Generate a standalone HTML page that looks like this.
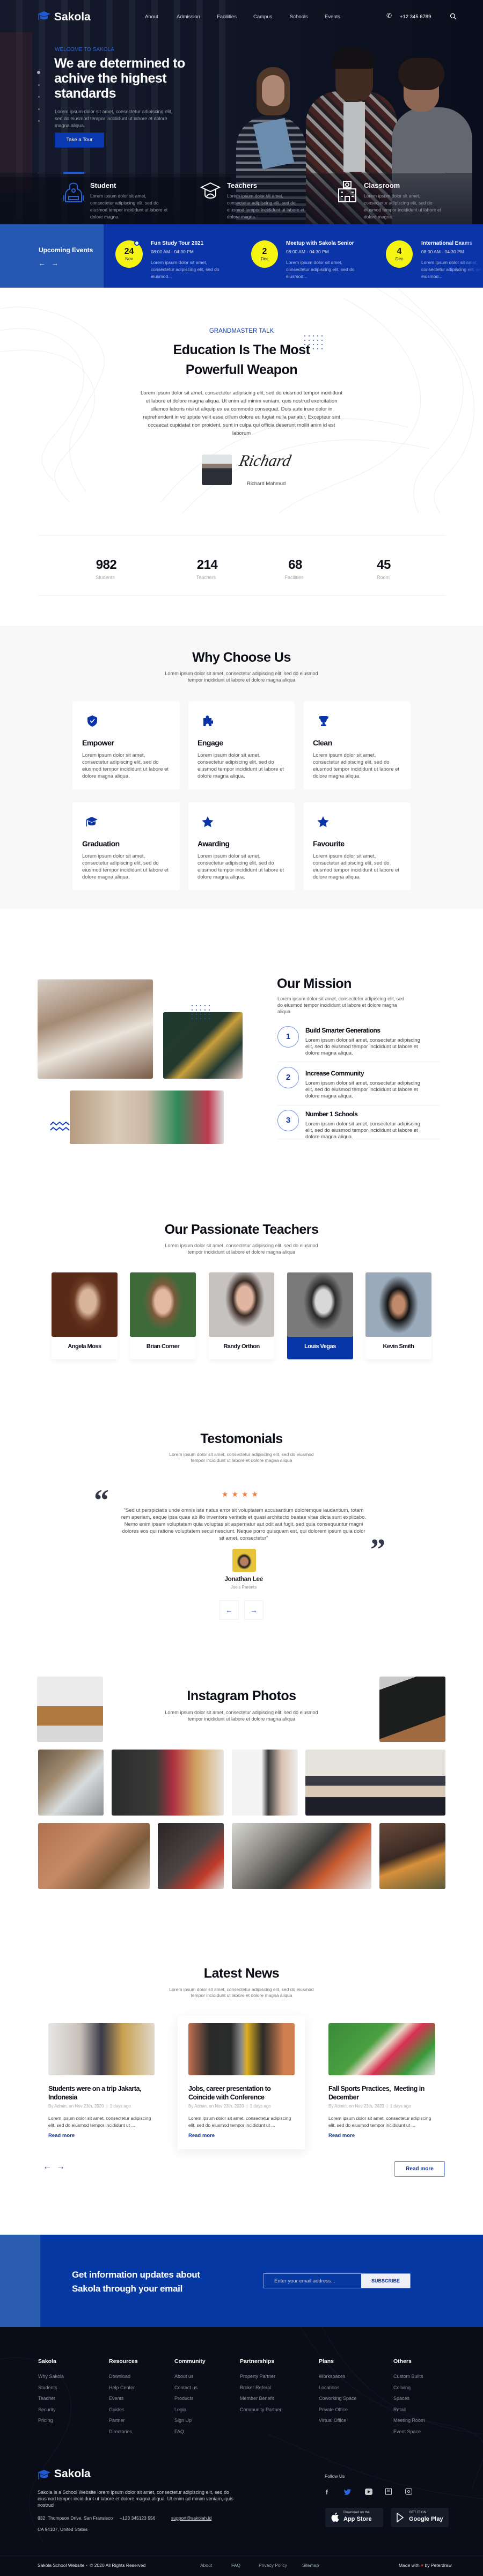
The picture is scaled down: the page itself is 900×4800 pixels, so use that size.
<!DOCTYPE html>
<html><head><meta charset="utf-8"><style>
*{margin:0;padding:0;box-sizing:border-box}
body{width:900px;height:4800px;position:relative;background:#fff;font-family:"Liberation Sans Narrow","Liberation Sans",sans-serif;color:#222;overflow:hidden}
.a{position:absolute}
.h{font-family:"Liberation Sans",sans-serif;font-weight:bold;color:#0b0d17;letter-spacing:-.5px}
.c{text-align:center}
.p{font-size:9.5px;color:#555;line-height:13px}
.card{background:#fff;border-radius:3px}
.ph{border-radius:3px;overflow:hidden}
.fl{font-size:9px;color:#8a8f9c}
</style></head><body>

<!-- HERO -->
<div class="a" style="left:0;top:0;width:900px;height:418px;background:linear-gradient(90deg,#141a2b 0%,#101626 45%,#0a0e1c 100%)"></div>
<div class="a" style="left:0;top:0;width:430px;height:418px;background:repeating-linear-gradient(90deg,rgba(255,255,255,0) 0 30px,rgba(120,130,150,.10) 30px 42px);"></div>
<div class="a" style="left:0;top:60px;width:60px;height:300px;background:rgba(90,40,40,.25)"></div>
<div class="a" style="left:0;top:330px;width:430px;height:88px;background:rgba(0,0,0,.35)"></div>
<!-- students -->
<div style="opacity:.85">
<div class="a" style="left:440px;top:215px;width:130px;height:203px;border-radius:60px 60px 0 0;background:repeating-linear-gradient(0deg,#1c2230 0 8px,#9ea3ac 8px 13px);opacity:.8"></div>
<div class="a" style="left:478px;top:125px;width:62px;height:90px;border-radius:30px 30px 20px 20px;background:#5b3e2b"></div>
<div class="a" style="left:488px;top:140px;width:42px;height:58px;border-radius:20px;background:#c99a82"></div>
<div class="a" style="left:480px;top:225px;width:60px;height:85px;background:#7ea3c8;transform:rotate(-12deg)"></div>
<div class="a" style="left:570px;top:170px;width:170px;height:248px;border-radius:60px 60px 0 0;background:repeating-linear-gradient(45deg,#4d2624 0 10px,#a9a4a2 10px 16px,#2a2224 16px 22px)"></div>
<div class="a" style="left:640px;top:190px;width:40px;height:130px;background:#dcdcdc"></div>
<div class="a" style="left:625px;top:95px;width:70px;height:95px;border-radius:32px;background:#4a3024"></div>
<div class="a" style="left:618px;top:88px;width:80px;height:40px;border-radius:40px 40px 10px 10px;background:#141010"></div>
<div class="a" style="left:730px;top:200px;width:150px;height:218px;border-radius:60px 60px 0 0;background:#74777e"></div>
<div class="a" style="left:752px;top:118px;width:66px;height:90px;border-radius:30px;background:#a6775e"></div>
<div class="a" style="left:742px;top:108px;width:86px;height:60px;border-radius:40px;background:#2a1c16"></div>
</div>
<div class="a" style="left:0;top:322px;width:900px;height:96px;background:linear-gradient(180deg,rgba(10,14,28,.4),rgba(10,14,28,.75))"></div>

<!-- nav -->
<svg class="a" style="left:69px;top:20px" width="26" height="20" viewBox="0 0 26 20"><path d="M13 1 25 6 13 11 1 6Z" fill="#1f5ad1"/><path d="M6 9v5c0 3 14 3 14 0V9l-7 3z" fill="#1f5ad1"/><path d="M3 7v10" stroke="#1f5ad1" stroke-width="1.5"/></svg>
<div class="a" style="left:101px;top:20px;font:bold 21px 'Liberation Sans',sans-serif;color:#fff">Sakola</div>
<div class="a" style="top:48px;left:0;width:900px;font-size:9.5px;color:#ddd">
<span class="a" style="left:270px;top:-22px">About</span><span class="a" style="left:329px;top:-22px">Admission</span><span class="a" style="left:404px;top:-22px">Facilities</span><span class="a" style="left:472px;top:-22px">Campus</span><span class="a" style="left:540px;top:-22px">Schools</span><span class="a" style="left:605px;top:-22px">Events</span></div>
<div class="a" style="left:720px;top:22px;color:#fff;font-size:12px">✆</div>
<div class="a" style="left:745px;top:26px;color:#fff;font-size:9.5px">+12 345 6789</div>
<svg class="a" style="left:838px;top:24px" width="13" height="13"><circle cx="5.5" cy="5.5" r="4" stroke="#fff" fill="none" stroke-width="1.3"/><path d="M8.5 8.5 12 12" stroke="#fff" stroke-width="1.3"/></svg>

<div class="a" style="left:69px;top:132px;width:6px;height:6px;border-radius:50%;background:#aab"></div>
<div class="a" style="left:71px;top:157px;width:3px;height:3px;border-radius:50%;background:#777"></div>
<div class="a" style="left:71px;top:179px;width:3px;height:3px;border-radius:50%;background:#777"></div>
<div class="a" style="left:71px;top:202px;width:3px;height:3px;border-radius:50%;background:#777"></div>
<div class="a" style="left:71px;top:224px;width:3px;height:3px;border-radius:50%;background:#777"></div>

<div class="a" style="left:102px;top:87px;font-size:10px;color:#2a62d4">WELCOME TO SAKOLA</div>
<div class="a h" style="left:101px;top:104px;font-size:25px;line-height:28px;color:#fff;width:360px">We are determined to<br>achive the highest<br>standards</div>
<div class="a" style="left:102px;top:202px;font-size:9px;color:#9aa;line-height:13px;width:230px">Lorem ipsum dolor sit amet, consectetur adipiscing elit, sed do eiusmod tempor incididunt ut labore et dolore magna aliqua.</div>
<div class="a" style="left:102px;top:247px;width:92px;height:28px;background:#0a38b0;border-radius:2px;color:#fff;font-size:9.5px;text-align:center;line-height:28px">Take a Tour</div>
<div class="a" style="left:70px;top:322px;width:760px;height:1px;background:rgba(255,255,255,.15)"></div>
<div class="a" style="left:118px;top:320px;width:39px;height:4px;background:#1f5ad1"></div>

<svg class="a" style="left:118px;top:338px" width="38" height="40" viewBox="0 0 38 40"><g fill="none" stroke="#2b63d6" stroke-width="2"><path d="M12 8c0-6 14-6 14 0v6c6 2 8 6 8 12v12H4V26c0-6 2-10 8-12z"/><circle cx="19" cy="17" r="3"/><path d="M10 28h18v6H10zM1 26v10M37 26v10"/></g></svg>
<svg class="a" style="left:373px;top:338px" width="38" height="40" viewBox="0 0 38 40"><g fill="none" stroke="#fff" stroke-width="2"><path d="M19 3 36 11 19 19 2 11Z"/><path d="M9 15v10c0 8 20 8 20 0V15"/><path d="M12 28c4-6 10-6 14 0"/></g></svg>
<svg class="a" style="left:628px;top:336px" width="38" height="42" viewBox="0 0 38 42"><g fill="none" stroke="#fff" stroke-width="2"><path d="M12 2h14v12h-14z"/><circle cx="19" cy="8" r="3"/><path d="M3 16h32v24H3z"/><path d="M15 40V30h8v10M7 22h4M27 22h4M7 30h4M27 30h4"/></g></svg>
<div class="a" style="left:168px;top:338px;font:bold 13px 'Liberation Sans',sans-serif;color:#fff">Student</div>
<div class="a" style="left:423px;top:338px;font:bold 13px 'Liberation Sans',sans-serif;color:#fff">Teachers</div>
<div class="a" style="left:678px;top:338px;font:bold 13px 'Liberation Sans',sans-serif;color:#fff">Classroom</div>
<div class="a" style="left:168px;top:359px;width:150px;font-size:8.5px;line-height:13px;color:#99a">Lorem ipsum dolor sit amet, consectetur adipiscing elit, sed do eiusmod tempor incididunt ut labore et dolore magna.</div>
<div class="a" style="left:423px;top:359px;width:150px;font-size:8.5px;line-height:13px;color:#99a">Lorem ipsum dolor sit amet, consectetur adipiscing elit, sed do eiusmod tempor incididunt ut labore et dolore magna.</div>
<div class="a" style="left:678px;top:359px;width:150px;font-size:8.5px;line-height:13px;color:#99a">Lorem ipsum dolor sit amet, consectetur adipiscing elit, sed do eiusmod tempor incididunt ut labore et dolore magna.</div>

<!-- EVENTS BAND -->
<div class="a" style="left:0;top:418px;width:900px;height:118px;background:#0b34a9"></div>
<div class="a" style="left:0;top:418px;width:193px;height:118px;background:#2458b2"></div>
<div class="a" style="left:72px;top:459px;font:bold 12px 'Liberation Sans',sans-serif;color:#fff">Upcoming Events</div>
<div class="a" style="left:72px;top:483px;color:#fff;font-size:13px">←&nbsp;&nbsp;&nbsp;→</div>
<div class="a" style="left:215px;top:448px;width:51px;height:51px;border-radius:50%;background:#f6f511;text-align:center;color:#111"><div style="font:bold 16px 'Liberation Sans',sans-serif;margin-top:12px">24</div><div style="font-size:8px">Nov</div></div>
<div class="a" style="left:250px;top:448px;width:10px;height:10px;border-radius:50%;background:#fff;border:2px solid #0b34a9"></div>
<div class="a" style="left:468px;top:448px;width:50px;height:51px;border-radius:50%;background:#f6f511;text-align:center;color:#111"><div style="font:bold 16px 'Liberation Sans',sans-serif;margin-top:12px">2</div><div style="font-size:8px">Dec</div></div>
<div class="a" style="left:719px;top:448px;width:50px;height:51px;border-radius:50%;background:#f6f511;text-align:center;color:#111"><div style="font:bold 16px 'Liberation Sans',sans-serif;margin-top:12px">4</div><div style="font-size:8px">Dec</div></div>
<div class="a" style="left:281px;top:448px;color:#fff;font-size:10px;font-weight:bold">Fun Study Tour 2021</div>
<div class="a" style="left:281px;top:464px;color:#dde;font-size:8.5px">08:00 AM - 04:30 PM</div>
<div class="a" style="left:281px;top:483px;width:150px;color:#a9b8e6;font-size:8.5px;line-height:13px">Lorem ipsum dolor sit amet, consectetur adipiscing elit, sed do eiusmod...</div>
<div class="a" style="left:533px;top:448px;color:#fff;font-size:10px;font-weight:bold">Meetup with Sakola Senior</div>
<div class="a" style="left:533px;top:464px;color:#dde;font-size:8.5px">08:00 AM - 04:30 PM</div>
<div class="a" style="left:533px;top:483px;width:150px;color:#a9b8e6;font-size:8.5px;line-height:13px">Lorem ipsum dolor sit amet, consectetur adipiscing elit, sed do eiusmod...</div>
<div class="a" style="left:785px;top:448px;color:#fff;font-size:10px;font-weight:bold;white-space:nowrap">International Exams</div>
<div class="a" style="left:785px;top:464px;color:#dde;font-size:8.5px;white-space:nowrap">08:00 AM - 04:30 PM</div>
<div class="a" style="left:785px;top:483px;width:150px;color:#a9b8e6;font-size:8.5px;line-height:13px">Lorem ipsum dolor sit amet, consectetur adipiscing elit, sed do eiusmod...</div>
<div class="a" style="left:860px;top:440px;width:40px;height:96px;background:linear-gradient(90deg,rgba(11,52,169,0),#0b34a9)"></div>

<!-- GRANDMASTER -->
<svg class="a" style="left:0;top:536px" width="900" height="420"><g fill="none" stroke="#eceef2" stroke-width="1"><path d="M0 80C100 60 180 120 150 200S40 300 100 360"/><path d="M0 120C120 100 200 160 170 240S60 330 130 400"/><path d="M0 40C80 20 220 80 190 160S90 280 160 380"/><path d="M700 0C800 60 880 120 860 220S740 330 780 420"/><path d="M740 0C830 80 900 160 880 260S780 360 820 420"/><path d="M640 20C760 80 820 200 760 280S600 360 520 420"/><path d="M300 400C420 250 600 220 760 260"/><path d="M340 420C460 290 620 260 800 300"/></g></svg>
<div class="a c" style="left:0;width:900px;top:611px;font-size:11.5px;color:#1344b4">GRANDMASTER TALK</div>
<svg class="a" style="left:566px;top:624px" width="38" height="28"><g fill="#1f4fc4"><circle cx="2" cy="2" r="1"/><circle cx="10" cy="2" r="1"/><circle cx="18" cy="2" r="1"/><circle cx="26" cy="2" r="1"/><circle cx="34" cy="2" r="1"/><circle cx="2" cy="10" r="1"/><circle cx="10" cy="10" r="1"/><circle cx="18" cy="10" r="1"/><circle cx="26" cy="10" r="1"/><circle cx="34" cy="10" r="1"/><circle cx="2" cy="18" r="1"/><circle cx="10" cy="18" r="1"/><circle cx="18" cy="18" r="1"/><circle cx="26" cy="18" r="1"/><circle cx="34" cy="18" r="1"/><circle cx="18" cy="26" r="1"/><circle cx="26" cy="26" r="1"/><circle cx="34" cy="26" r="1"/></g></svg>
<div class="a c h" style="left:0;width:900px;top:634px;font-size:25px;line-height:37px">Education Is The Most<br>Powerfull Weapon</div>
<div class="a c" style="left:258px;width:384px;top:725px;font-size:9.5px;line-height:15px;color:#444">Lorem ipsum dolor sit amet, consectetur adipiscing elit, sed do eiusmod tempor incididunt ut labore et dolore magna aliqua. Ut enim ad minim veniam, quis nostrud exercitation ullamco laboris nisi ut aliquip ex ea commodo consequat. Duis aute irure dolor in reprehenderit in voluptate velit esse cillum dolore eu fugiat nulla pariatur. Excepteur sint occaecat cupidatat non proident, sunt in culpa qui officia deserunt mollit anim id est laborum</div>
<div class="a ph" style="left:376px;top:847px;width:56px;height:57px;background:linear-gradient(180deg,#dfe5e4 0 30%,#8a7a70 30% 45%,#2c2f38 45%)"></div>
<div class="a" style="left:446px;top:842px;font:italic 30px 'Liberation Serif',serif;color:#222;transform:skewX(-12deg)">Richard</div>
<div class="a" style="left:460px;top:896px;font-size:9.5px;color:#444">Richard Mahmud</div>

<div class="a" style="left:70px;top:997px;width:760px;height:1px;background:#eef0f3"></div>
<div class="a" style="left:70px;top:1109px;width:760px;height:1px;background:#eef0f3"></div>
<div class="a c h" style="left:148px;width:100px;top:1039px;font-size:24px">982</div>
<div class="a c h" style="left:336px;width:100px;top:1039px;font-size:24px">214</div>
<div class="a c h" style="left:500px;width:100px;top:1039px;font-size:24px">68</div>
<div class="a c h" style="left:665px;width:100px;top:1039px;font-size:24px">45</div>
<div class="a c" style="left:146px;width:100px;top:1071px;font-size:9px;color:#aaa">Students</div>
<div class="a c" style="left:334px;width:100px;top:1071px;font-size:9px;color:#aaa">Teachers</div>
<div class="a c" style="left:498px;width:100px;top:1071px;font-size:9px;color:#aaa">Facilities</div>
<div class="a c" style="left:664px;width:100px;top:1071px;font-size:9px;color:#aaa">Room</div>

<!-- WHY CHOOSE -->
<div class="a" style="left:0;top:1166px;width:900px;height:527px;background:#f8f8f8"></div>
<div class="a c h" style="left:0;width:900px;top:1211px;font-size:25px">Why Choose Us</div>
<div class="a c" style="left:300px;width:300px;top:1249px;font-size:9px;line-height:12px;color:#555">Lorem ipsum dolor sit amet, consectetur adipiscing elit, sed do eiusmod tempor incididunt ut labore et dolore magna aliqua</div>

<div class="a card" style="left:135px;top:1307px;width:200px;height:164px"></div>
<div class="a card" style="left:351px;top:1307px;width:198px;height:164px"></div>
<div class="a card" style="left:566px;top:1307px;width:199px;height:164px"></div>
<div class="a card" style="left:135px;top:1495px;width:200px;height:164px"></div>
<div class="a card" style="left:351px;top:1495px;width:198px;height:164px"></div>
<div class="a card" style="left:566px;top:1495px;width:199px;height:164px"></div>

<svg class="a" style="left:163px;top:1333px" width="18" height="21" viewBox="0 0 18 21"><path d="M9 0 18 4v6c0 6-4 9-9 11C4 19 0 16 0 10V4z" fill="#0b34a9"/><path d="M5 10l3 3 5-6" stroke="#fff" stroke-width="1.6" fill="none"/></svg>
<svg class="a" style="left:377px;top:1333px" width="20" height="20" viewBox="0 0 20 20"><path d="M2 5h5a3 3 0 1 1 5 0h5v5a3 3 0 1 1 0 5v5h-5a3 3 0 1 0-5 0H2z" fill="#0b34a9"/></svg>
<svg class="a" style="left:593px;top:1333px" width="20" height="21" viewBox="0 0 20 21"><path d="M4 1h12v6c0 4-3 7-6 7S4 11 4 7z M1 2h3v5C2 7 1 5 1 2zM19 2h-3v5c2 0 3-2 3-5zM8 14h4v3h3v3H5v-3h3z" fill="#0b34a9"/></svg>
<svg class="a" style="left:159px;top:1521px" width="24" height="22" viewBox="0 0 24 22"><path d="M12 1 23 6 12 11 1 6Z M5 9v5c0 4 14 4 14 0V9l-7 3z" fill="#0b34a9"/><path d="M2 7v12" stroke="#0b34a9" stroke-width="1.6"/></svg>
<svg class="a" style="left:376px;top:1521px" width="22" height="21" viewBox="0 0 24 23"><path d="M12 0l3.5 7.5 8.2 1-6 5.6 1.6 8.1L12 18.2 4.7 22.2l1.6-8.1-6-5.6 8.2-1z" fill="#0b34a9"/></svg>
<svg class="a" style="left:591px;top:1521px" width="22" height="21" viewBox="0 0 24 23"><path d="M12 0l3.5 7.5 8.2 1-6 5.6 1.6 8.1L12 18.2 4.7 22.2l1.6-8.1-6-5.6 8.2-1z" fill="#0b34a9"/></svg>

<div class="a h" style="left:153px;top:1376px;font-size:14px">Empower</div>
<div class="a h" style="left:368px;top:1376px;font-size:14px">Engage</div>
<div class="a h" style="left:583px;top:1376px;font-size:14px">Clean</div>
<div class="a h" style="left:153px;top:1564px;font-size:14px">Graduation</div>
<div class="a h" style="left:368px;top:1564px;font-size:14px">Awarding</div>
<div class="a h" style="left:583px;top:1564px;font-size:14px">Favourite</div>
<div class="a p" style="left:153px;top:1401px;width:162px">Lorem ipsum dolor sit amet, consectetur adipiscing elit, sed do eiusmod tempor incididunt ut labore et dolore magna aliqua.</div>
<div class="a p" style="left:368px;top:1401px;width:162px">Lorem ipsum dolor sit amet, consectetur adipiscing elit, sed do eiusmod tempor incididunt ut labore et dolore magna aliqua.</div>
<div class="a p" style="left:583px;top:1401px;width:162px">Lorem ipsum dolor sit amet, consectetur adipiscing elit, sed do eiusmod tempor incididunt ut labore et dolore magna aliqua.</div>
<div class="a p" style="left:153px;top:1589px;width:162px">Lorem ipsum dolor sit amet, consectetur adipiscing elit, sed do eiusmod tempor incididunt ut labore et dolore magna aliqua.</div>
<div class="a p" style="left:368px;top:1589px;width:162px">Lorem ipsum dolor sit amet, consectetur adipiscing elit, sed do eiusmod tempor incididunt ut labore et dolore magna aliqua.</div>
<div class="a p" style="left:583px;top:1589px;width:162px">Lorem ipsum dolor sit amet, consectetur adipiscing elit, sed do eiusmod tempor incididunt ut labore et dolore magna aliqua.</div>

<!-- MISSION -->
<div class="a ph" style="left:70px;top:1825px;width:215px;height:185px;background:linear-gradient(160deg,#d8cfc6 0%,#a58a74 35%,#e9e3da 60%,#7a5a46 100%)"></div>
<div class="a ph" style="left:304px;top:1886px;width:148px;height:124px;background:linear-gradient(135deg,#1f3a30 0%,#23392f 45%,#caa03a 55%,#213a31 75%,#e4c5bb 100%)"></div>
<div class="a ph" style="left:130px;top:2032px;width:287px;height:100px;background:linear-gradient(90deg,#b59a80 0%,#d9cbb7 30%,#c9b8a4 50%,#2f8a5a 70%,#c03a50 90%,#ddd 100%)"></div>
<svg class="a" style="left:356px;top:1872px" width="38" height="28"><g fill="#1f4fc4"><circle cx="2" cy="2" r="1"/><circle cx="10" cy="2" r="1"/><circle cx="18" cy="2" r="1"/><circle cx="26" cy="2" r="1"/><circle cx="34" cy="2" r="1"/><circle cx="2" cy="10" r="1"/><circle cx="10" cy="10" r="1"/><circle cx="18" cy="10" r="1"/><circle cx="26" cy="10" r="1"/><circle cx="34" cy="10" r="1"/><circle cx="2" cy="18" r="1"/><circle cx="10" cy="18" r="1"/><circle cx="18" cy="18" r="1"/><circle cx="26" cy="18" r="1"/><circle cx="34" cy="18" r="1"/><circle cx="2" cy="26" r="1"/><circle cx="10" cy="26" r="1"/><circle cx="18" cy="26" r="1"/><circle cx="26" cy="26" r="1"/><circle cx="34" cy="26" r="1"/></g></svg>
<svg class="a" style="left:93px;top:2090px" width="38" height="18"><g fill="none" stroke="#1340b8" stroke-width="2"><path d="M1 6 6 1 12 6 18 1 24 6 30 1 36 6"/><path d="M1 16 6 11 12 16 18 11 24 16 30 11 36 16"/></g></svg>

<div class="a h" style="left:516px;top:1819px;font-size:25px">Our Mission</div>
<div class="a" style="left:517px;top:1855px;width:240px;font-size:9px;line-height:12px;color:#555">Lorem ipsum dolor sit amet, consectetur adipiscing elit, sed do eiusmod tempor incididunt ut labore et dolore magna aliqua</div>
<div class="a" style="left:517px;top:1912px;width:40px;height:40px;border-radius:50%;border:1.5px solid #6d8ee0;color:#0b34a9;font:bold 15px 'Liberation Sans',sans-serif;text-align:center;line-height:37px">1</div>
<div class="a" style="left:517px;top:1988px;width:40px;height:40px;border-radius:50%;border:1.5px solid #6d8ee0;color:#0b34a9;font:bold 15px 'Liberation Sans',sans-serif;text-align:center;line-height:37px">2</div>
<div class="a" style="left:517px;top:2068px;width:40px;height:40px;border-radius:50%;border:1.5px solid #6d8ee0;color:#0b34a9;font:bold 15px 'Liberation Sans',sans-serif;text-align:center;line-height:37px">3</div>
<div class="a h" style="left:569px;top:1913px;font-size:12px">Build Smarter Generations</div>
<div class="a h" style="left:569px;top:1993px;font-size:12px">Increase Community</div>
<div class="a h" style="left:569px;top:2069px;font-size:12px">Number 1 Schools</div>
<div class="a" style="left:569px;top:1933px;width:225px;font-size:9.5px;line-height:12px;color:#444">Lorem ipsum dolor sit amet, consectetur adipiscing elit, sed do eiusmod tempor incididunt ut labore et dolore magna aliqua.</div>
<div class="a" style="left:569px;top:2013px;width:225px;font-size:9.5px;line-height:12px;color:#444">Lorem ipsum dolor sit amet, consectetur adipiscing elit, sed do eiusmod tempor incididunt ut labore et dolore magna aliqua.</div>
<div class="a" style="left:569px;top:2089px;width:225px;font-size:9.5px;line-height:12px;color:#444">Lorem ipsum dolor sit amet, consectetur adipiscing elit, sed do eiusmod tempor incididunt ut labore et dolore magna aliqua.</div>
<div class="a" style="left:517px;top:1978px;width:303px;height:1px;background:#f0f1f4"></div>
<div class="a" style="left:517px;top:2059px;width:303px;height:1px;background:#f0f1f4"></div>
<div class="a" style="left:517px;top:2122px;width:303px;height:1px;background:#f0f1f4"></div>

<!-- TEACHERS -->
<div class="a c h" style="left:0;width:900px;top:2277px;font-size:25px">Our Passionate Teachers</div>
<div class="a c" style="left:300px;width:300px;top:2315px;font-size:9px;line-height:12px;color:#666">Lorem ipsum dolor sit amet, consectetur adipiscing elit, sed do eiusmod tempor incididunt ut labore et dolore magna aliqua</div>

<div class="a" style="left:96px;top:2371px;width:123px;height:162px;box-shadow:0 4px 8px rgba(0,0,0,.05);border-radius:3px"></div>
<div class="a" style="left:242px;top:2371px;width:123px;height:162px;box-shadow:0 4px 8px rgba(0,0,0,.05);border-radius:3px"></div>
<div class="a" style="left:389px;top:2371px;width:122px;height:162px;box-shadow:0 4px 8px rgba(0,0,0,.05);border-radius:3px"></div>
<div class="a" style="left:535px;top:2371px;width:123px;height:162px;background:#0636a8;border-radius:3px"></div>
<div class="a" style="left:681px;top:2371px;width:123px;height:162px;box-shadow:0 4px 8px rgba(0,0,0,.05);border-radius:3px"></div>
<div class="a ph" style="left:96px;top:2371px;width:123px;height:120px;background:radial-gradient(ellipse 30% 45% at 55% 45%,#d8b49a 0 40%,#6b3a22 70%,#5a2a18 100%)"></div>
<div class="a ph" style="left:242px;top:2371px;width:123px;height:120px;background:radial-gradient(ellipse 30% 45% at 50% 45%,#e2b8a0 0 40%,#7a5a3a 60%,#3e6a3a 100%)"></div>
<div class="a ph" style="left:389px;top:2371px;width:122px;height:120px;background:radial-gradient(ellipse 30% 45% at 55% 40%,#e0b6a0 0 40%,#3a2a24 60%,#c6c2c0 100%)"></div>
<div class="a ph" style="left:535px;top:2371px;width:123px;height:120px;background:radial-gradient(ellipse 30% 45% at 55% 45%,#d8d8d8 0 40%,#2a2a2a 60%,#7a7a7a 100%)"></div>
<div class="a ph" style="left:681px;top:2371px;width:123px;height:120px;background:radial-gradient(ellipse 30% 45% at 50% 50%,#c08a6a 0 30%,#141414 55%,#9aaabb 100%)"></div>
<div class="a c h" style="left:96px;width:123px;top:2503px;font-size:11px">Angela Moss</div>
<div class="a c h" style="left:242px;width:123px;top:2503px;font-size:11px">Brian Corner</div>
<div class="a c h" style="left:389px;width:122px;top:2503px;font-size:11px">Randy Orthon</div>
<div class="a c h" style="left:535px;width:123px;top:2503px;font-size:11px;color:#fff">Louis Vegas</div>
<div class="a c h" style="left:681px;width:123px;top:2503px;font-size:11px">Kevin Smith</div>

<!-- TESTIMONIALS -->
<div class="a c h" style="left:0;width:900px;top:2667px;font-size:25px">Testomonials</div>
<div class="a c" style="left:315px;width:270px;top:2705px;font-size:8.5px;line-height:11px;color:#777">Lorem ipsum dolor sit amet, consectetur adipiscing elit, sed do eiusmod tempor incididunt ut labore et dolore magna aliqua</div>
<div class="a" style="left:175px;top:2768px;font:bold 56px 'Liberation Serif',serif;color:#34364a;line-height:56px">“</div>
<div class="a" style="left:690px;top:2860px;font:bold 56px 'Liberation Serif',serif;color:#34364a;line-height:56px">”</div>
<div class="a c" style="left:0;width:900px;top:2776px;font-size:14px;color:#f47a3a;letter-spacing:6px">★★★★</div>
<div class="a c" style="left:222px;width:464px;top:2808px;font-size:9.5px;line-height:13px;color:#555">"Sed ut perspiciatis unde omnis iste natus error sit voluptatem accusantium doloremque laudantium, totam rem aperiam, eaque ipsa quae ab illo inventore veritatis et quasi architecto beatae vitae dicta sunt explicabo. Nemo enim ipsam voluptatem quia voluptas sit aspernatur aut odit aut fugit, sed quia consequuntur magni dolores eos qui ratione voluptatem sequi nesciunt. Neque porro quisquam est, qui dolorem ipsum quia dolor sit amet, consectetur"</div>
<div class="a ph" style="left:433px;top:2886px;width:44px;height:43px;background:radial-gradient(ellipse at 50% 55%,#b58060 0 22%,#1a1a1a 32%,#e6c33a 45%)"></div>
<div class="a c h" style="left:0;width:908px;top:2935px;font-size:12px;color:#222">Jonathan Lee</div>
<div class="a c" style="left:0;width:908px;top:2953px;font-size:8px;color:#888">Joe's Parents</div>
<div class="a" style="left:409px;top:2982px;width:36px;height:36px;border:1px solid #f1f1f4;color:#0b34a9;text-align:center;line-height:36px;font-size:13px">←</div>
<div class="a" style="left:455px;top:2982px;width:36px;height:36px;border:1px solid #f1f1f4;color:#0b34a9;text-align:center;line-height:36px;font-size:13px">→</div>

<!-- INSTAGRAM -->
<div class="a ph" style="left:69px;top:3124px;width:123px;height:122px;background:linear-gradient(180deg,#ececec 0 45%,#b07a40 45% 75%,#d8d8d8 75%)"></div>
<div class="a ph" style="left:707px;top:3124px;width:123px;height:122px;background:linear-gradient(160deg,#c8c8c8 0 15%,#1c1e1e 15% 70%,#a06a40 70%)"></div>
<div class="a c h" style="left:0;width:900px;top:3146px;font-size:25px">Instagram Photos</div>
<div class="a c" style="left:300px;width:300px;top:3185px;font-size:9px;line-height:12px;color:#555">Lorem ipsum dolor sit amet, consectetur adipiscing elit, sed do eiusmod tempor incididunt ut labore et dolore magna aliqua</div>
<div class="a ph" style="left:71px;top:3260px;width:122px;height:123px;background:linear-gradient(135deg,#6a5a48 0%,#a08a70 35%,#d8dcdc 60%,#8a8e90 100%)"></div>
<div class="a ph" style="left:208px;top:3260px;width:209px;height:123px;background:linear-gradient(90deg,#2a2c2c 0%,#3a3a38 40%,#b03040 55%,#d0a060 75%,#e8e4dc 100%)"></div>
<div class="a ph" style="left:432px;top:3260px;width:123px;height:123px;background:linear-gradient(90deg,#f4f4f4 0 45%,#3a3a3a 55%,#d8c0b0 75%,#eee 100%)"></div>
<div class="a ph" style="left:569px;top:3260px;width:261px;height:123px;background:linear-gradient(180deg,#e6e2dc 0 40%,#3a3a46 40% 55%,#d8ccb8 55% 72%,#1e1e2a 72%)"></div>
<div class="a ph" style="left:71px;top:3397px;width:208px;height:123px;background:linear-gradient(135deg,#b07050 0%,#c88a66 40%,#7a5a3a 70%,#d8c8b8 100%)"></div>
<div class="a ph" style="left:294px;top:3397px;width:123px;height:123px;background:linear-gradient(135deg,#2a2424 0%,#4a4444 50%,#c03a2a 75%,#d8d4d0 100%)"></div>
<div class="a ph" style="left:432px;top:3397px;width:260px;height:123px;background:linear-gradient(135deg,#d8d8d4 0%,#8a8880 30%,#3a3a3a 55%,#c85a30 70%,#e4e4e4 100%)"></div>
<div class="a ph" style="left:707px;top:3397px;width:123px;height:123px;background:linear-gradient(160deg,#6a4a3a 0%,#3a2a24 45%,#d8903a 60%,#5a5a3a 100%)"></div>

<!-- LATEST NEWS -->
<div class="a c h" style="left:0;width:900px;top:3663px;font-size:25px">Latest News</div>
<div class="a c" style="left:315px;width:270px;top:3702px;font-size:8.5px;line-height:11px;color:#777">Lorem ipsum dolor sit amet, consectetur adipiscing elit, sed do eiusmod tempor incididunt ut labore et dolore magna aliqua</div>
<div class="a" style="left:331px;top:3756px;width:237px;height:249px;background:#fff;box-shadow:0 6px 20px rgba(0,0,0,.08)"></div>
<div class="a ph" style="left:90px;top:3770px;width:198px;height:97px;background:linear-gradient(90deg,#e6e6e6 0%,#c8c0b8 30%,#3a3a4a 50%,#c8a050 70%,#e0d8c8 100%)"></div>
<div class="a ph" style="left:351px;top:3770px;width:198px;height:97px;background:linear-gradient(90deg,#c07050 0%,#2a2a2a 20%,#2a2c2c 40%,#8a8a8a 50%,#e0b020 55%,#2a2a2a 70%,#d08050 90%)"></div>
<div class="a ph" style="left:612px;top:3770px;width:199px;height:97px;background:linear-gradient(135deg,#3a8a3a 0%,#4aa040 40%,#e8d8c8 50%,#d83050 60%,#3a9a3a 80%,#e8e8e8 100%)"></div>
<div class="a h" style="left:90px;top:3884px;width:200px;font-size:12.5px;line-height:16px">Students were on a trip Jakarta, Indonesia</div>
<div class="a h" style="left:351px;top:3884px;width:200px;font-size:12.5px;line-height:16px">Jobs, career presentation to Coincide with Conference</div>
<div class="a h" style="left:612px;top:3884px;width:200px;font-size:12.5px;line-height:16px">Fall Sports Practices,&nbsp; Meeting in December</div>
<div class="a" style="left:90px;top:3920px;font-size:8px;color:#aaa">By Admin, on Nov 23th, 2020 &nbsp;| &nbsp;1 days ago</div>
<div class="a" style="left:351px;top:3920px;font-size:8px;color:#aaa">By Admin, on Nov 23th, 2020 &nbsp;| &nbsp;1 days ago</div>
<div class="a" style="left:612px;top:3920px;font-size:8px;color:#aaa">By Admin, on Nov 23th, 2020 &nbsp;| &nbsp;1 days ago</div>
<div class="a" style="left:90px;top:3941px;width:195px;font-size:8.5px;line-height:13px;color:#444">Lorem ipsum dolor sit amet, consectetur adipiscing elit, sed do eiusmod tempor incididunt ut ...</div>
<div class="a" style="left:351px;top:3941px;width:195px;font-size:8.5px;line-height:13px;color:#444">Lorem ipsum dolor sit amet, consectetur adipiscing elit, sed do eiusmod tempor incididunt ut ...</div>
<div class="a" style="left:612px;top:3941px;width:195px;font-size:8.5px;line-height:13px;color:#444">Lorem ipsum dolor sit amet, consectetur adipiscing elit, sed do eiusmod tempor incididunt ut ...</div>
<div class="a" style="left:90px;top:3974px;font-size:9.5px;font-weight:bold;color:#0b34a9">Read more</div>
<div class="a" style="left:351px;top:3974px;font-size:9.5px;font-weight:bold;color:#0b34a9">Read more</div>
<div class="a" style="left:612px;top:3974px;font-size:9.5px;font-weight:bold;color:#0b34a9">Read more</div>
<div class="a" style="left:80px;top:4029px;font-size:16px;color:#0b34a9">←&nbsp;&nbsp;→</div>
<div class="a" style="left:735px;top:4027px;width:94px;height:29px;border:1px solid #6d8ee0;border-radius:2px;color:#0b34a9;font-size:10px;font-weight:bold;text-align:center;line-height:27px">Read more</div>

<!-- SUBSCRIBE -->
<div class="a" style="left:0;top:4164px;width:900px;height:172px;background:#0739a5"></div>
<div class="a" style="left:0;top:4164px;width:75px;height:172px;background:#2a5daf"></div>
<div class="a h" style="left:134px;top:4226px;font-size:17px;line-height:26px;color:#fff;letter-spacing:-.3px">Get information updates about<br>Sakola through your email</div>
<div class="a" style="left:490px;top:4236px;width:275px;height:28px;border:1px solid #8ba4e4;border-radius:2px"></div>
<div class="a" style="left:511px;top:4245px;font-size:9.5px;color:#c8d3f0">Enter your email address...</div>
<div class="a" style="left:673px;top:4237px;width:91px;height:26px;background:#eef0f6;color:#0b34a9;font-size:9px;font-weight:bold;text-align:center;line-height:26px">SUBSCRIBE</div>

<!-- FOOTER -->
<div class="a" style="left:0;top:4336px;width:900px;height:464px;background:#0a0d17"></div>
<svg class="a" style="left:0;top:4336px" width="900" height="420"><g fill="none" stroke="#141826" stroke-width="1"><path d="M0 60C100 40 160 120 120 200S20 300 80 400"/><path d="M560 0C620 100 700 160 820 180S900 240 880 300"/><path d="M600 0C660 110 740 180 900 200"/><path d="M500 200C600 240 700 300 900 320"/></g></svg>
<div style="color:#fff;font-size:10.5px;font-weight:bold">
<div class="a" style="left:71px;top:4394px">Sakola</div><div class="a" style="left:203px;top:4394px">Resources</div><div class="a" style="left:325px;top:4394px">Community</div><div class="a" style="left:447px;top:4394px">Partnerships</div><div class="a" style="left:594px;top:4394px">Plans</div><div class="a" style="left:733px;top:4394px">Others</div></div>
<div class="a fl" style="left:71px;top:4418px;line-height:20.6px">Why Sakola<br>Students<br>Teacher<br>Security<br>Pricing</div>
<div class="a fl" style="left:203px;top:4418px;line-height:20.6px">Download<br>Help Center<br>Events<br>Guides<br>Partner<br>Directories</div>
<div class="a fl" style="left:325px;top:4418px;line-height:20.6px">About us<br>Contact us<br>Products<br>Login<br>Sign Up<br>FAQ</div>
<div class="a fl" style="left:447px;top:4418px;line-height:20.6px">Property Partner<br>Broker Referal<br>Member Benefit<br>Community Partner</div>
<div class="a fl" style="left:594px;top:4418px;line-height:20.6px">Workspaces<br>Locations<br>Coworking Space<br>Private Office<br>Virtual Office</div>
<div class="a fl" style="left:733px;top:4418px;line-height:20.6px">Custom Builts<br>Coliving<br>Spaces<br>Retail<br>Meeting Room<br>Event Space</div>

<svg class="a" style="left:69px;top:4598px" width="26" height="26" viewBox="0 0 26 20"><path d="M13 1 25 6 13 11 1 6Z" fill="#1f5ad1"/><path d="M6 9v5c0 3 14 3 14 0V9l-7 3z" fill="#1f5ad1"/><path d="M3 7v12" stroke="#1f5ad1" stroke-width="1.5"/></svg>
<div class="a" style="left:101px;top:4598px;font:bold 21px 'Liberation Sans',sans-serif;color:#fff">Sakola</div>
<div class="a" style="left:70px;top:4638px;width:380px;font-size:9px;line-height:12px;color:#c8ccd6">Sakola is a School Website lorem ipsum dolor sit amet, consectetur adipiscing elit, sed do eiusmod tempor incididunt ut labore et dolore magna aliqua. Ut enim ad minim veniam, quis nostrud</div>
<div class="a" style="left:70px;top:4682px;font-size:8.5px;line-height:21px;color:#c8ccd6">832&nbsp; Thompson Drive, San Fransisco<br>CA 94107, United States</div>
<div class="a" style="left:223px;top:4682px;font-size:8.5px;line-height:21px;color:#c8ccd6">+123 345123 556</div>
<div class="a" style="left:319px;top:4682px;font-size:8.5px;line-height:21px;color:#c8ccd6;text-decoration:underline">support@sakolah.id</div>
<div class="a" style="left:605px;top:4609px;font-size:8.5px;color:#c8ccd6">Follow Us</div>
<div class="a" style="left:607px;top:4637px;font-size:12px;color:#ccc;font-weight:bold">f</div>
<svg class="a" style="left:641px;top:4638px" width="13" height="11" viewBox="0 0 24 20"><path d="M24 2c-1 .5-2 .7-3 .9 1-.6 2-1.6 2.3-2.7-1 .6-2 1-3 1.2C18.4.5 17 0 15.6 0c-3 0-5.4 2.5-4.8 6C6.8 5.8 3.3 4 1 1.1c-1.4 2.3-.4 5.2 1.5 6.6-.8 0-1.5-.3-2.2-.6 0 2.4 1.7 4.4 4 4.9-.7.2-1.5.2-2.2.1.6 2 2.5 3.4 4.6 3.4C4.7 17.2 2.4 18 0 17.8 2.2 19.2 4.8 20 7.5 20c9.1 0 14.3-7.7 14-14.6 1-.7 1.8-1.6 2.5-2.5z" fill="#2a66e0"/></svg>
<div class="a" style="left:680px;top:4637px;width:14px;height:12px;border-radius:3px;background:#ccc"></div>
<div class="a" style="left:685px;top:4640px;width:0;height:0;border-left:5px solid #0a0d17;border-top:3px solid transparent;border-bottom:3px solid transparent"></div>
<div class="a" style="left:718px;top:4636px;width:12px;height:13px;border:1.5px solid #ccc;border-radius:2px;font-size:7px;color:#ccc;text-align:center;line-height:10px;font-weight:bold">in</div>
<div class="a" style="left:755px;top:4636px;width:13px;height:13px;border:1.5px solid #ccc;border-radius:4px"></div>
<div class="a" style="left:759px;top:4640px;width:5px;height:5px;border:1.2px solid #ccc;border-radius:50%"></div>
<div class="a" style="left:606px;top:4673px;width:108px;height:36px;background:#161b2a;border-radius:3px"></div>
<div class="a" style="left:728px;top:4673px;width:108px;height:36px;background:#161b2a;border-radius:3px"></div>
<svg class="a" style="left:616px;top:4680px" width="16" height="20" viewBox="0 0 16 20"><path d="M13 10.5c0-2 1.6-3 1.7-3-1-1.4-2.4-1.6-3-1.6-1.3-.1-2.5.8-3.1.8-.7 0-1.7-.8-2.8-.7-1.4 0-2.8.9-3.5 2.2-1.5 2.6-.4 6.5 1.1 8.6.7 1 1.6 2.2 2.7 2.2s1.5-.7 2.8-.7 1.7.7 2.8.7c1.2 0 1.9-1 2.6-2.1.8-1.2 1.2-2.4 1.2-2.4s-2.3-.9-2.3-3.6zM10.9 4.4c.6-.7 1-1.7.9-2.7-.9 0-1.9.6-2.5 1.3-.6.6-1.1 1.6-.9 2.6 1 .1 1.9-.5 2.5-1.2z" fill="#fff"/></svg>
<div class="a" style="left:640px;top:4678px;font-size:6.5px;color:#ccc">Download on the</div>
<div class="a" style="left:640px;top:4688px;font-size:11px;color:#fff;font-weight:bold">App Store</div>
<svg class="a" style="left:739px;top:4682px" width="13" height="18"><path d="M1 1 12 9 1 17Z" fill="none" stroke="#fff" stroke-width="1.5"/></svg>
<div class="a" style="left:762px;top:4678px;font-size:6.5px;color:#ccc">GET IT ON</div>
<div class="a" style="left:762px;top:4688px;font-size:11px;color:#fff;font-weight:bold">Google Play</div>

<div class="a" style="left:0;top:4762px;width:900px;height:1px;background:#161a26"></div>
<div class="a" style="left:70px;top:4775px;font-size:8.5px;color:#e0e0e6">Sakola School Website - &nbsp;© 2020 All Rights Reserved</div>
<div class="a" style="left:373px;top:4775px;font-size:8.5px;color:#9aa">About</div>
<div class="a" style="left:431px;top:4775px;font-size:8.5px;color:#9aa">FAQ</div>
<div class="a" style="left:482px;top:4775px;font-size:8.5px;color:#9aa">Privacy Policy</div>
<div class="a" style="left:563px;top:4775px;font-size:8.5px;color:#9aa">Sitemap</div>
<div class="a" style="left:743px;top:4775px;font-size:8.5px;color:#e0e0e6">Made with <span style="color:#e02a2a">♥</span> by Peterdraw</div>
</body></html>
